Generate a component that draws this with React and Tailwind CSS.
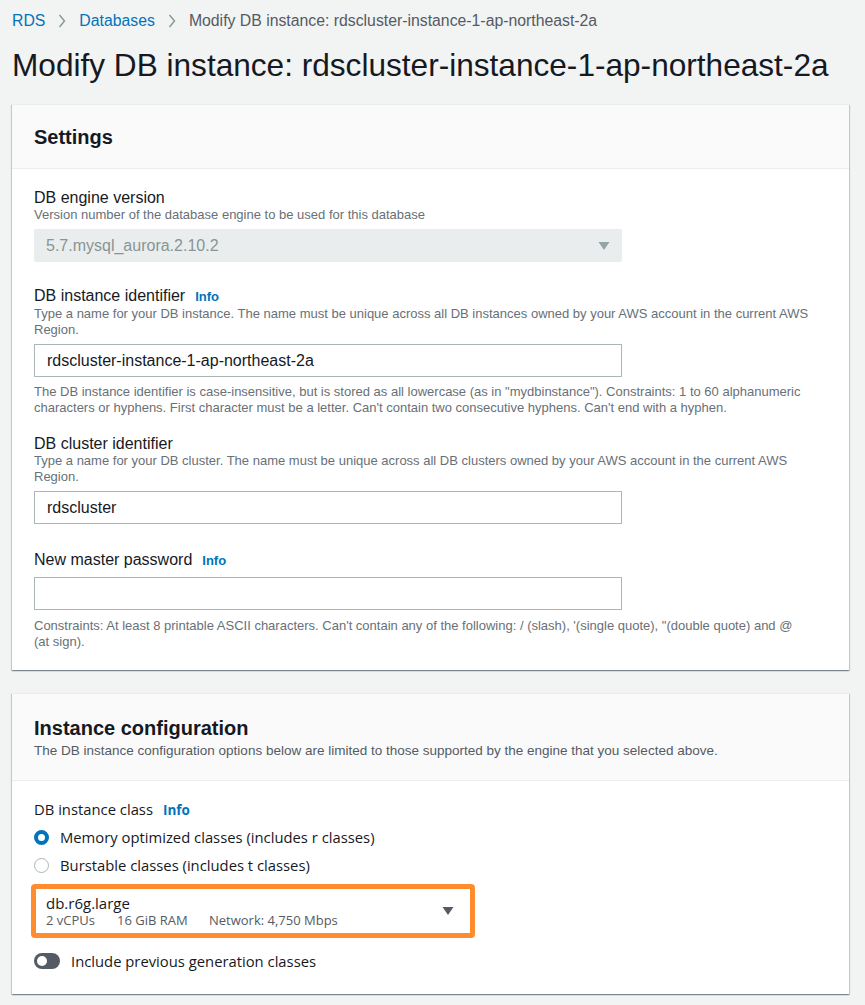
import React from "react";

const F = { fontFamily: '"Liberation Sans", Arial, sans-serif' };
const O = { fontFamily: '"Open Sans", sans-serif' };

function Info() {
  return <span className="ml-[10px] text-[13px] font-bold text-[#0073bb]">Info</span>;
}

function Label({ children, info }) {
  return (
    <div className="text-[16px] leading-[18px] text-[#16191f]">
      {children}
      {info && <Info />}
    </div>
  );
}

function Desc({ children, className = "max-w-[780px]" }) {
  return <div className={`${className} text-[13px] leading-[16px] text-[#687078]`}>{children}</div>;
}

function Input({ value, className = "mt-[6px]" }) {
  return (
    <div className={`${className} h-[33px] w-[588px] border border-[#aab7b8] bg-white px-3 flex items-center text-[16px] text-[#16191f]`}>
      {value}
    </div>
  );
}

function Chevron() {
  return (
    <svg className="mx-[12px]" width="10" height="16" viewBox="0 0 10 16">
      <path d="M2.5 2 L7.5 8 L2.5 14" fill="none" stroke="#879596" strokeWidth="1.4" />
    </svg>
  );
}

const cardShadow =
  "bg-white border-t border-[#eaeded] shadow-[0_1px_1px_0_rgba(0,28,36,0.3),1px_1px_1px_0_rgba(0,28,36,0.15),-1px_1px_1px_0_rgba(0,28,36,0.15)]";

export default function App() {
  return (
    <div className="min-h-[1005px] bg-[#f2f3f3] pl-3 pr-4 text-[#16191f]" style={F}>
      <div className="flex items-center h-[42px] text-[15.8px]">
        <span className="text-[#0073bb]">RDS</span>
        <Chevron />
        <span className="text-[#0073bb]">Databases</span>
        <Chevron />
        <span className="text-[#545b64]">Modify DB instance: rdscluster-instance-1-ap-northeast-2a</span>
      </div>
      <h1 className="text-[31.6px] leading-[40px] pt-[3px] pb-[19px] text-[#16191f]">
        Modify DB instance: rdscluster-instance-1-ap-northeast-2a
      </h1>

      <section className={cardShadow}>
        <div className="h-[64px] bg-[#fafafa] border-b border-[#eaeded] flex items-center px-[22px]">
          <h2 className="text-[20px] font-bold">Settings</h2>
        </div>
        <div className="px-[22px] pt-[20px] pb-[20px]">
          <Label>DB engine version</Label>
          <Desc>Version number of the database engine to be used for this database</Desc>
          <div className="mt-[6px] h-[33px] w-[588px] bg-[#eaeded] rounded-[2px] px-3 flex items-center justify-between text-[16px] text-[#879596]">
            <span>5.7.mysql_aurora.2.10.2</span>
            <svg width="12" height="10" viewBox="0 0 12 10">
              <path d="M0.5 1 L11.5 1 L6 9 Z" fill="#95a5a6" />
            </svg>
          </div>

          <div className="mt-[25px]">
            <Label info>DB instance identifier</Label>
            <Desc>
              Type a name for your DB instance. The name must be unique across all DB instances owned by your AWS account in the current AWS Region.
            </Desc>
            <Input value="rdscluster-instance-1-ap-northeast-2a" />
            <div className="mt-[7px]">
              <Desc>
                The DB instance identifier is case-insensitive, but is stored as all lowercase (as in "mydbinstance"). Constraints: 1 to 60 alphanumeric characters or hyphens. First character must be a letter. Can't contain two consecutive hyphens. Can't end with a hyphen.
              </Desc>
            </div>
          </div>

          <div className="mt-[19px]">
            <Label>DB cluster identifier</Label>
            <Desc>
              Type a name for your DB cluster. The name must be unique across all DB clusters owned by your AWS account in the current AWS Region.
            </Desc>
            <Input value="rdscluster" />
          </div>

          <div className="mt-[27px]">
            <Label info>New master password</Label>
            <Input value="" className="mt-[7px]" />
            <div className="mt-[8px]">
              <Desc className="max-w-[765px]">
                Constraints: At least 8 printable ASCII characters. Can't contain any of the following: / (slash), '(single quote), "(double quote) and @ (at sign).
              </Desc>
            </div>
          </div>
        </div>
      </section>

      <section className={`mt-[23px] ${cardShadow}`}>
        <div className="h-[87px] bg-[#fafafa] border-b border-[#eaeded] flex flex-col justify-center px-[22px] pt-[2px]">
          <h2 className="text-[20px] font-bold leading-[26px]">Instance configuration</h2>
          <div className="text-[13.5px] leading-[20px] text-[#545b64]">
            The DB instance configuration options below are limited to those supported by the engine that you selected above.
          </div>
        </div>
        <div className="px-[22px] pt-[19px] pb-[22px]" style={O}>
          <div className="text-[14.8px] leading-[18px] text-[#16191f]">
            DB instance class
            <span className="ml-[10px] text-[13.5px] font-bold text-[#0073bb]">Info</span>
          </div>
          <div className="mt-[6px] flex items-center h-[24px] text-[14.8px]">
            <span className="w-[15px] h-[15px] rounded-full border-[4px] border-[#0073bb] bg-white mr-[11px]" />
            Memory optimized classes (includes r classes)
          </div>
          <div className="mt-[4px] flex items-center h-[24px] text-[14.8px]">
            <span className="w-[15px] h-[15px] rounded-full border border-[#aab7b8] bg-white mr-[11px]" />
            Burstable classes (includes t classes)
          </div>
          <div className="mt-[7px] -ml-[3px] w-[444px] border-[5px] border-[#ff8c2f] rounded-[4px]">
            <div className="h-[44px] bg-white flex items-center justify-between pl-[10px] pr-[16px]">
              <div>
                <div className="text-[15px] leading-[18px]">db.r6g.large</div>
                <div className="text-[13px] leading-[16px] text-[#545b64] flex">
                  <span className="w-[71px]">2 vCPUs</span>
                  <span className="w-[92px]">16 GiB RAM</span>
                  <span>Network: 4,750 Mbps</span>
                </div>
              </div>
              <svg width="12" height="10" viewBox="0 0 12 10">
                <path d="M0.5 1 L11.5 1 L6 9 Z" fill="#545b64" />
              </svg>
            </div>
          </div>
          <div className="mt-[12px] flex items-center text-[14.8px]">
            <span className="w-[26px] h-[16px] rounded-full bg-[#545b64] mr-[11px] flex items-center pl-[3px]">
              <span className="w-[10px] h-[10px] rounded-full bg-white" />
            </span>
            Include previous generation classes
          </div>
        </div>
      </section>
      <div className="h-[12px]" />
    </div>
  );
}
